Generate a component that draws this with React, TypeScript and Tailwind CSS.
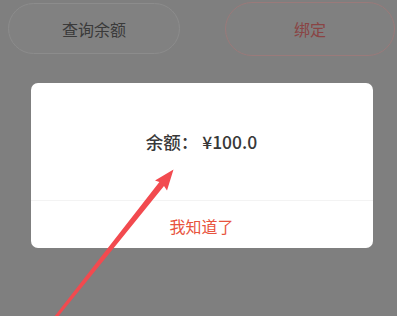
import React from "react";

export default function App() {
  return (
    <div
      className="relative w-[397px] h-[316px] overflow-hidden bg-[#7f7f7f]"
      style={{ fontFamily: '"Noto Sans CJK SC", "Noto Sans", sans-serif' }}
    >
      <div className="flex items-start justify-between pl-[8px] pr-[2px] pt-[2px]">
        <div className="mt-[1px] flex h-[51px] w-[172px] items-center justify-center rounded-full border border-[#8c8c8c] bg-[#818181] text-[16px] text-[#3a3a3a]">
          查询余额
        </div>
        <div className="flex h-[54px] w-[170px] items-center justify-center rounded-full border border-[#9a7a7a] bg-[#808080] text-[16px] text-[#8a4444]">
          绑定
        </div>
      </div>

      <div className="mx-auto mt-[27px] flex w-[342px] translate-x-[3px] flex-col rounded-[7px] bg-white">
        <div className="flex h-[117px] items-center justify-center pt-[2px] text-[17.5px] font-medium text-[#383838]">
          余额：&nbsp;¥100.0
        </div>
        <div className="h-px bg-[#f3f3f3]" />
        <div className="flex h-[47px] items-center justify-center pt-[2px] text-[16px] text-[#e8543e]">
          我知道了
        </div>
      </div>

      <svg
        className="pointer-events-none absolute left-0 top-0"
        width="397"
        height="316"
        viewBox="0 0 397 316"
      >
        <polygon
          points="53.2,318 56.2,319 164,185.9 167,190.5 173.5,169.5 155,180.5 159.4,182.1"
          fill="#f24a4f"
        />
      </svg>
    </div>
  );
}
